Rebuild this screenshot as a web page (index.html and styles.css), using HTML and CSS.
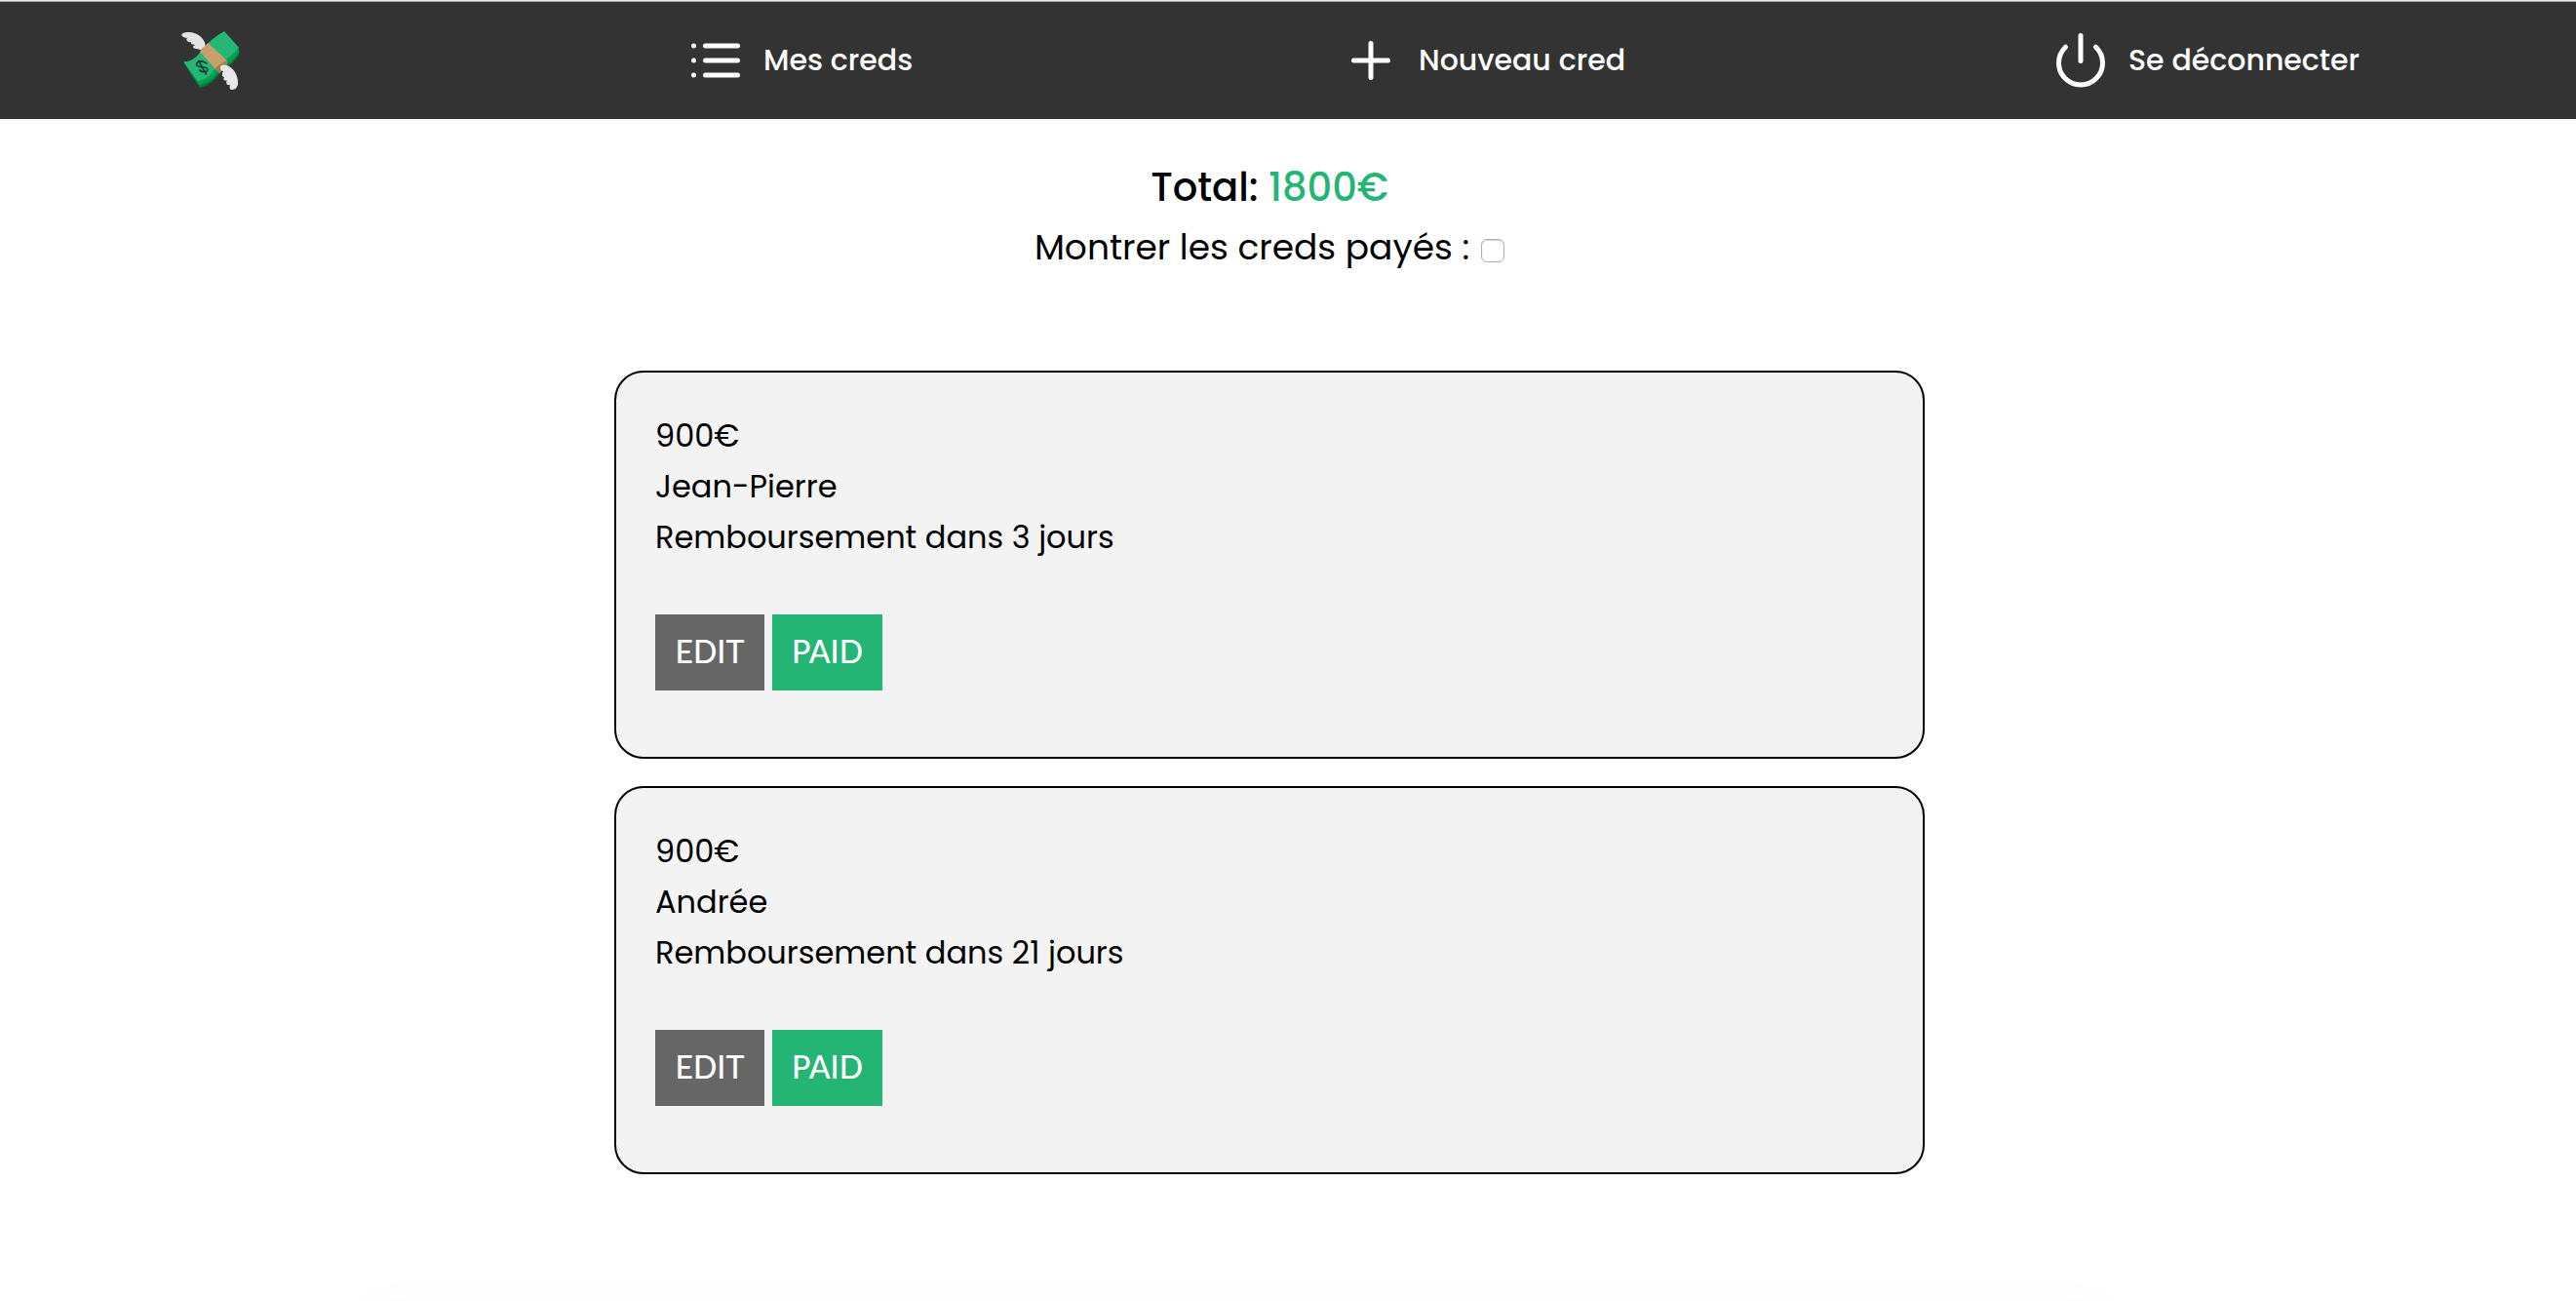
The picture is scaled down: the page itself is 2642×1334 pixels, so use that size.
FILE: index.html
```html
<!DOCTYPE html>
<html lang="fr">
<head>
  <meta charset="utf-8">
  <meta name="viewport" content="width=device-width, initial-scale=1">
  <title>Mes creds</title>
  <link rel="stylesheet" href="styles.css">
</head>
<body>
  <nav class="navbar">
    <a class="nav-link" href="#" aria-label="Accueil">
      <svg class="logo" viewBox="78 96 180 180" aria-hidden="true">
        <path fill="#007f3b" d="M87 196L135 270Q152 266 170 254Q186 238 206 217Q236 198 256 168L254 156L130 236Z"/>
        <path fill="#00a04c" d="M85 191L133 262Q156 256 172 243Q188 226 206 208Q236 190 257 159L253 146L120 226Z"/>
        <path fill="#26b675" d="M85 190Q116 188 133 164Q164 122 210 96L255 146Q230 176 206 188Q188 206 172 224Q156 244 129 250Z"/>
        <path fill="#c9a06c" d="M135 158Q146 146 160 132L219 187L216 200L195 224L181 211Z"/>
        <path fill="#a87c4c" d="M181 211Q196 196 218 186L218 200L196 225Z"/>
        <path fill="#e4e4e4" d="M152 140C150 119 130 101 104 99C90 98 78 102 79 108C80 114 88 116 96 117C90 122 96 130 109 130C105 135 111 138 121 138C110 142 113 149 123 150Q132 151 138 154Z"/>
        <path fill="#e8e8e8" d="M198 209C196 200 207 197 218 201C238 207 254 232 252 258C251 270 242 277 231 276C225 275 227 266 227 260C219 264 214 258 218 247C210 249 205 245 210 237C203 238 201 230 207 219Q198 217 198 209Z"/>
        <path fill="none" stroke="#20392c" stroke-width="5" stroke-linecap="round" d="M155 195C144 184 123 188 125 199C128 211 155 202 158 212C161 223 144 224 134 216M131 187L154 228"/>
      </svg>
    </a>
    <a class="nav-link" href="#">
      <svg class="nav-icon" viewBox="0 0 512 512" aria-hidden="true"><path d="M172 136h264M172 256h264M172 376h264M76 136v0M76 256v0M76 376v0"/></svg>
      <span>Mes creds</span>
    </a>
    <a class="nav-link" href="#">
      <svg class="nav-icon" viewBox="0 0 512 512" aria-hidden="true"><path d="M256 116v280M116 256h280"/></svg>
      <span>Nouveau cred</span>
    </a>
    <a class="nav-link" href="#">
      <svg class="nav-icon" viewBox="0 0 512 512" aria-hidden="true"><path d="M256 52v208M132 146a180 180 0 1 0 248 0"/></svg>
      <span>Se déconnecter</span>
    </a>
  </nav>

  <main class="page">
    <h1 class="total">Total: <span class="amount">1800€</span></h1>
    <div class="filter">
      <label for="show-paid">Montrer les creds payés :</label>
      <input class="checkbox" type="checkbox" id="show-paid">
    </div>

    <section class="creds">
      <article class="cred">
        <p>900€</p>
        <p>Jean-Pierre</p>
        <p>Remboursement dans 3 jours</p>
        <div class="actions">
          <button class="btn btn-edit" type="button">EDIT</button>
          <button class="btn btn-paid" type="button">PAID</button>
        </div>
      </article>
      <article class="cred">
        <p>900€</p>
        <p>Andrée</p>
        <p>Remboursement dans 21 jours</p>
        <div class="actions">
          <button class="btn btn-edit" type="button">EDIT</button>
          <button class="btn btn-paid" type="button">PAID</button>
        </div>
      </article>
    </section>
  </main>
</body>
</html>
```
FILE: styles.css
```css
* {
  box-sizing: border-box;
}

body {
  margin: 0;
  background: #fff;
  color: #000;
  font-family: Poppins, Inter, sans-serif;
  font-size: 32px;
  line-height: 52px;
}

h1,
p {
  margin: 0;
}

.navbar {
  display: grid;
  grid-template-columns: 516fr 672fr 728fr 540fr;
  align-items: center;
  height: 122px;
  padding-left: 186px;
  border-top: 1px solid #e9eceb;
  box-shadow: inset 0 1px #a5abaa;
  background: #333;
}

.nav-link {
  display: flex;
  align-items: center;
  gap: 17px;
  color: #fff;
  font-size: 30px;
  font-weight: 500;
  text-decoration: none;
  white-space: nowrap;
}

.logo {
  width: 60px;
  height: 60px;
}

.nav-icon {
  width: 64px;
  height: 64px;
  fill: none;
  stroke: #fff;
  stroke-width: 40;
  stroke-linecap: round;
  stroke-linejoin: round;
}

.page {
  display: flex;
  flex-direction: column;
  align-items: center;
  padding: 40px 38px 40px 0;
}

.total {
  font-size: 40px;
  font-weight: 500;
  line-height: 61px;
}

.amount {
  color: #24b574;
}

.filter {
  display: flex;
  align-items: center;
  gap: 12px;
  font-size: 36px;
  line-height: 61px;
}

.checkbox {
  appearance: none;
  width: 24px;
  height: 24px;
  margin: 6px 0 0;
  border: 1px solid #b0b0b0;
  border-radius: 6px;
  background: #fff;
  box-shadow: inset 0 1px 1px #d0d0d0;
}

.checkbox:checked {
  background: #24b574;
}

.creds {
  display: flex;
  flex-direction: column;
  gap: 28px;
  width: 100%;
  max-width: 1344px;
  margin-top: 96px;
}

.cred {
  padding: 39px 40px 68px;
  border: 2px solid #000;
  border-radius: 30px;
  background: #f3f3f3;
}

.actions {
  display: flex;
  gap: 8px;
  margin-top: 53px;
}

.btn {
  min-width: 112px;
  padding: 12px 20px 14px;
  border: 0;
  color: #fff;
  font-family: Lato, sans-serif;
  font-size: 32px;
  font-weight: 500;
  line-height: 52px;
  cursor: pointer;
}

.btn-edit {
  background: #666;
}

.btn-paid {
  background: #24b574;
}

/* Soft glow rising from the bottom edge of the window */
body::after {
  content: "";
  position: fixed;
  top: 100%;
  left: 14%;
  right: 18%;
  height: 40px;
  box-shadow: 0 0 50px rgba(0, 0, 0, 0.02);
}
```
